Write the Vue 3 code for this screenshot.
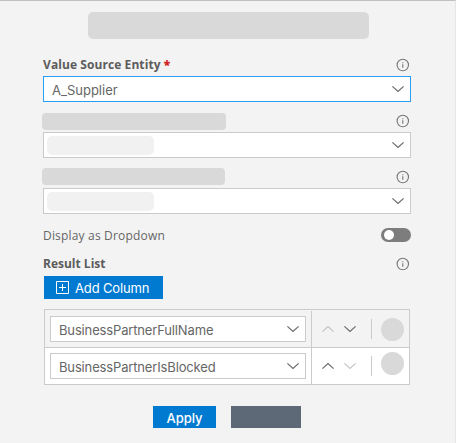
<script setup>
import { h } from 'vue'

const Info = () =>
  h('svg', { class: 'info', width: 14, height: 14, viewBox: '0 0 14 14', fill: 'none', stroke: '#767676' }, [
    h('circle', { cx: 6.8, cy: 7, r: 5.7, 'stroke-width': 1.1 }),
    h('path', { d: 'M6.8 6.2v3.6M6.8 4.2v1.1', 'stroke-width': 1.1 })
  ])

const Chevron = (props) =>
  h('svg', { width: 12, height: 8, viewBox: '0 0 12 8', fill: 'none', stroke: props.muted ? '#c4c4c4' : '#6a6a6a', 'stroke-width': 1.2 }, [
    h('path', { d: props.up ? 'M.4 6.6 6 1.5l5.6 5.1' : 'M.4 1.4 6 6.5l5.6-5.1' })
  ])
Chevron.props = { up: Boolean, muted: Boolean }

const columns = ['BusinessPartnerFullName', 'BusinessPartnerIsBlocked']
</script>

<template>
  <main class="panel">
    <div class="title"></div>

    <section class="field">
      <div class="head">
        <span class="label entity">Value Source Entity <b class="star">*</b></span>
        <Info />
      </div>
      <div class="select active"><span class="text supplier">A_Supplier</span><Chevron /></div>
    </section>

    <section v-for="n in 2" :key="n" class="field" :class="'field-' + n">
      <div class="head">
        <span class="bar"></span>
        <Info />
      </div>
      <div class="select"><span class="pill"></span><Chevron /></div>
    </section>

    <div class="toggle-row">
      <span class="display">Display as Dropdown</span>
      <span class="toggle"><i></i></span>
    </div>

    <div class="head result">
      <span class="label list">Result List</span>
      <Info />
    </div>

    <button class="button add">
      <svg width="13" height="13" viewBox="0 0 13 13" fill="none" stroke="#fff">
        <path d="M.5.5h12v12H.5zM6.5 3v7M3 6.5h7" />
      </svg>
      <span class="add-text">Add Column</span>
    </button>

    <div class="table">
      <div v-for="(name, i) in columns" :key="name" class="row">
        <div class="cell">
          <div class="select"><span class="text">{{ name }}</span><Chevron /></div>
        </div>
        <div class="actions">
          <Chevron up :muted="i === 0" />
          <Chevron :muted="i === 1" />
          <span class="divider"></span>
          <span class="dot"></span>
        </div>
      </div>
    </div>

    <footer>
      <button class="button apply"><span class="apply-text">Apply</span></button>
      <button class="button dark"></button>
    </footer>
  </main>
</template>

<style>
body {
  background: #f3f3f3;
}
</style>

<style scoped>
* {
  box-sizing: border-box;
}
.panel {
  width: 456px;
  height: 443px;
  padding: 11px 44px 0 43px;
  background: #f3f3f3;
  border-top: 1px solid #c2c2c2;
  border-right: 1px solid #e6e6e6;
  color: #666;
  font-family: Inter, sans-serif;
  overflow: hidden;
}
.title {
  width: 281px;
  height: 27px;
  margin: 0 0 17px 45px;
  border-radius: 5px;
  background: #d9d9d9;
}
.head {
  display: flex;
  justify-content: space-between;
  align-items: center;
  height: 18px;
  padding-right: 1px;
}
.field {
  height: 56px;
}
.field .head {
  margin-bottom: 2px;
}
.info {
  flex: none;
}
.label,
.display {
  font-family: "Open Sans", "Noto Sans", sans-serif;
  font-size: 12px;
  line-height: 18px;
  white-space: nowrap;
}
.label {
  color: #5c5c5c;
  font-weight: 700;
}
.entity {
  letter-spacing: 0.08px;
}
.display {
  padding-top: 2px;
  letter-spacing: 0.18px;
}
.star {
  color: #d32020;
}
.select {
  display: flex;
  align-items: center;
  justify-content: space-between;
  width: 368px;
  height: 26px;
  padding: 0 6px 0 8px;
  border: 1px solid #cbcbcb;
  background: #fff;
}
.active {
  border-color: #2a9df4;
}
.text {
  padding-top: 2px;
  font-size: 13px;
  line-height: 22px;
}
.cell .text {
  letter-spacing: -0.15px;
}
.bar {
  width: 184px;
  height: 17px;
  margin-left: -1px;
  border-radius: 4px;
  background: #d9d9d9;
}
.field-2 .bar {
  width: 183px;
  margin-bottom: 1px;
}
.pill {
  width: 107px;
  height: 19px;
  margin-left: -5px;
  border-radius: 5px;
  background: #f1f1f1;
}
.toggle-row {
  display: flex;
  align-items: center;
  justify-content: space-between;
  height: 20px;
  margin-top: 1px;
}
.toggle {
  width: 30px;
  height: 14px;
  padding: 2px 3px;
  border-radius: 7px;
  background: #7d7d7d;
}
.toggle i {
  display: block;
  width: 10px;
  height: 10px;
  border-radius: 50%;
  background: #fff;
}
.result {
  margin: 10px 0 3px;
}
.button {
  display: flex;
  align-items: center;
  justify-content: center;
  height: 22px;
  padding: 0;
  border: 0;
  background: #007ad1;
  color: #fff;
  font: 13px/22px Inter, sans-serif;
}
.add {
  width: 119px;
  height: 23px;
  margin-left: 1px;
  padding: 0 0 1px 12px;
  justify-content: flex-start;
  gap: 6px;
}
.add-text {
  padding-top: 2px;
  letter-spacing: -0.15px;
}
.table {
  width: 366px;
  margin: 10px 0 0 1px;
  border: 1px solid #cbcbcb;
}
.row {
  display: flex;
  height: 37px;
}
.row + .row {
  border-top: 1px solid #cbcbcb;
  background: #fff;
}
.cell {
  width: 266px;
  padding: 6px 0 0 5px;
}
.row + .row .cell {
  padding-top: 5px;
}
.cell .select {
  width: 256px;
}
.actions {
  display: flex;
  align-items: center;
  flex: 1;
  gap: 10px;
  margin-top: 1px;
  padding-left: 10px;
  border-left: 1px solid #cbcbcb;
}
.row + .row .actions {
  margin-top: 0;
}
.divider {
  width: 1px;
  height: 20px;
  margin-left: 5px;
  background: #cbcbcb;
}
.dot {
  width: 23px;
  height: 23px;
  margin-left: -1px;
  border-radius: 50%;
  background: #d9d9d9;
}
.row:first-child .dot {
  margin-top: 1px;
}
.row + .row .dot {
  margin-bottom: 5px;
}
footer {
  display: flex;
  gap: 15px;
  margin: 21px 0 0 110px;
}
.apply {
  width: 63px;
  font-weight: 500;
}
.apply-text {
  padding-top: 1px;
}
.dark {
  width: 70px;
  background: #5d6977;
}
</style>
